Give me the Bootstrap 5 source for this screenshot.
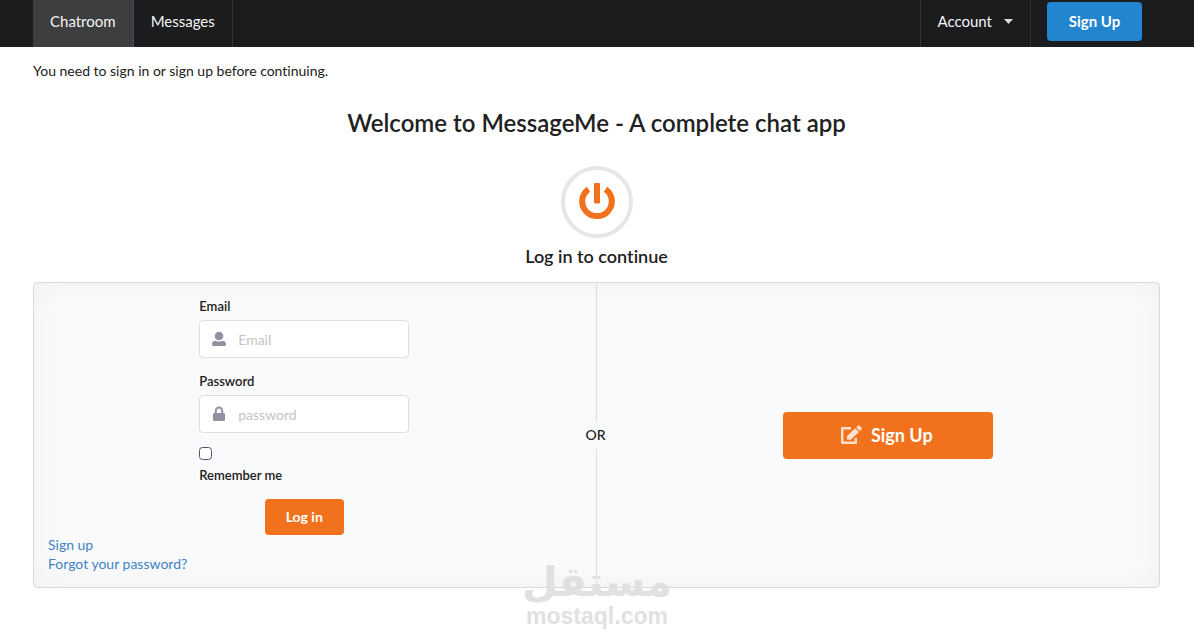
<!DOCTYPE html>
<html lang="en">
<head>
<meta charset="utf-8">
<meta name="viewport" content="width=device-width, initial-scale=1">
<title>MessageMe</title>
<link href="https://cdn.jsdelivr.net/npm/bootstrap@5.3.0/dist/css/bootstrap.min.css" rel="stylesheet">
<style>
  body { font-family: Lato, "Liberation Sans", sans-serif; font-size: 14px; line-height: 19px; color: #212121; background: #fff; font-variant-ligatures: none; }
  .page-pad { padding-left: 33px; padding-right: 34px; }
  .topbar { background: #1b1c1d; min-height: 47px; font-size: 15px; }
  .topbar .nav-link { color: #f4f4f4; padding: 0 17px 4px; height: 47px; display: flex; align-items: center; border-right: 1px dotted #48494a; }
  .topbar .nav-link.active { background: #3d3e3f; border-right-color: #5d4860; }
  .topbar .account-link { border-left: 1px dotted #48494a; padding-left: 16px; }
  .account-link::after { display: none; }
  .account-link svg { margin-left: 12px; }
  .btn { --bs-btn-border-width: 0; --bs-btn-border-radius: 4px; font-weight: 700; line-height: 18px; }
  .btn-signup { --bs-btn-color: #fff; --bs-btn-bg: #2185d0; --bs-btn-hover-color: #fff; --bs-btn-hover-bg: #1678c2; width: 95px; height: 39px; font-size: 15px; margin: 2px 18px 6px 16px; padding: 0 0 2px; }
  .btn-flame { --bs-btn-color: #fff; --bs-btn-bg: #f2711c; --bs-btn-hover-color: #fff; --bs-btn-hover-bg: #f26202; }
  .btn-login { font-size: 14px; height: 36px; padding: 0 21px; }
  .btn-join { font-size: 18px; width: 210px; height: 47px; padding: 0 5px 0 0; }
  h1, h2 { font-weight: 600; margin: 0; color: #212121; }
  .notice { padding-top: 14px; }
  h1 { font-size: 24px; line-height: 30px; margin-top: 28px; }
  h2 { font-size: 18px; line-height: 24px; }
  .power-ring { width: 72px; height: 72px; border: 4px solid #e6e6e6; border-radius: 50%; margin: 28px auto 6px; }
  .login-panel { background: #f9fafb; border: 1px solid #d8d9db; border-radius: 4px; box-shadow: inset 0 0 30px #f0f0f0; margin-top: 14px; }
  .login-side { padding: 14px 36px 14px 14px; }
  .join-side { padding: 14px 14px 14px 35px; }
  .login-fields { width: 210px; }
  .login-fields label { font-size: 13px; font-weight: 600; line-height: 18px; }
  .field-box { margin: 5px 0 14px; }
  .field-box .form-control { height: 38px; border: 1px solid #dededf; border-radius: 4px; font-size: 14px; padding: 0 14px 0 38px; }
  .form-control::placeholder { color: #c4c4c5; }
  .field-box svg { position: absolute; left: 12px; top: 11px; }
  .remember-box { width: 13px; height: 13px; margin: 0 0 6px; border: 1px solid #6b4a68; border-radius: 3px; float: none; }
  .login-action { margin-top: 15px; }
  .panel-link { color: #4183c4; text-decoration: none; }
  .split { width: 0; }
  .split i { border-left: 1px solid #dcddde; }
  .split span { line-height: 19px; padding: 3px 2px 5px 0; white-space: nowrap; font-weight: 500; }
  .stage { padding-bottom: 44px; }
  .brandmark { position: absolute; left: 0; right: 0; bottom: 2px; color: #dedede; opacity: .9; pointer-events: none; font-weight: 700; }
  .brandmark .brand-ar { font-family: "DejaVu Sans", sans-serif; font-size: 41px; line-height: 40px; }
  .brandmark .brand-en { font-family: "Liberation Sans", sans-serif; font-size: 23px; line-height: 28px; }
</style>
</head>
<body>
<nav class="topbar page-pad d-flex justify-content-between">
  <div class="d-flex">
    <a class="nav-link active" href="#">Chatroom</a>
    <a class="nav-link" href="#">Messages</a>
  </div>
  <div class="d-flex">
    <div class="dropdown">
      <a class="nav-link account-link dropdown-toggle" href="#" role="button" data-bs-toggle="dropdown" aria-expanded="false">Account
        <svg width="9" height="5" aria-hidden="true"><path d="M0 0h9L4.500 5z" fill="#dcdcdc"/></svg></a>
      <ul class="dropdown-menu"><li><a class="dropdown-item" href="#">Log in</a></li></ul>
    </div>
    <button class="btn btn-signup" type="button">Sign Up</button>
  </div>
</nav>

<main class="page-pad stage position-relative">
  <p class="mb-0 notice">You need to sign in or sign up before continuing.</p>
  <header class="text-center">
    <h1>Welcome to MessageMe - A complete chat app</h1>
    <div class="power-ring d-flex align-items-center justify-content-center">
      <svg width="36" height="38" viewBox="0 0 36 38" fill="none" stroke="#f2711c" aria-hidden="true">
        <path d="M9.500 6.200A14.800 14.800 0 1 0 26.500 6.200" stroke-width="6"/>
        <rect x="15" y="0" width="6" height="20.500" rx="1" fill="#f2711c" stroke="none"/>
      </svg>
    </div>
    <h2>Log in to continue</h2>
  </header>

  <section class="login-panel d-flex">
    <div class="login-side flex-fill w-50">
      <form>
        <div class="login-fields mx-auto">
          <label class="d-block" for="email">Email</label>
          <div class="field-box position-relative">
            <input class="form-control" id="email" type="email" placeholder="Email">
            <svg width="16" height="16" viewBox="0 0 16 16" fill="#9390a2" aria-hidden="true"><circle cx="8" cy="5" r="4.300"/><path d="M1 13.500Q1 10 4.500 9.700Q8 11.500 11.500 9.700Q15 10 15 13.500Q15 15 13.500 15h-11Q1 15 1 13.500z"/></svg>
          </div>
          <label class="d-block" for="password">Password</label>
          <div class="field-box position-relative">
            <input class="form-control" id="password" type="password" placeholder="password">
            <svg width="16" height="16" viewBox="0 0 16 16" fill="#9390a2" aria-hidden="true"><rect x="2" y="7" width="12" height="8" rx="1.300"/><path d="M4.800 8V4.800a3.200 3.200 0 0 1 6.400 0V8" fill="none" stroke="#9390a2" stroke-width="2"/></svg>
          </div>
          <input class="remember-box form-check-input d-block" id="remember" type="checkbox">
          <label class="d-block" for="remember">Remember me</label>
        </div>
        <div class="login-action d-flex justify-content-center"><button class="btn btn-flame btn-login" type="submit">Log in</button></div>
      </form>
      <a class="panel-link" href="#">Sign up</a><br>
      <a class="panel-link" href="#">Forgot your password?</a>
    </div>
    <div class="split d-flex flex-column align-items-center">
      <i class="flex-fill"></i><span>OR</span><i class="flex-fill"></i>
    </div>
    <div class="join-side flex-fill w-50 d-flex align-items-center justify-content-center">
      <button class="btn btn-flame btn-join d-flex align-items-center justify-content-center" type="button">
        <svg class="me-2" width="24" height="22" viewBox="0 0 24 22" fill="#fce0cb" aria-hidden="true"><path d="M12 4.200H3.200V18.800H16.800V14" fill="none" stroke="#fce0cb" stroke-width="2.400" stroke-linejoin="round"/><path d="M8 15.800V12L16.200 4.300l3.800 3.800-8.200 7.700z"/><path d="M17.200 3.400 19 1.600q.7-.6 1.400 0l2.300 2.300q.6.700 0 1.400L20.900 7.100z"/></svg>
        Sign Up</button>
    </div>
  </section>
  <div class="brandmark text-center">
    <div class="brand-ar" lang="ar" dir="rtl">مستقل</div>
    <div class="brand-en">mostaql.com</div>
  </div>
</main>
<script src="https://cdn.jsdelivr.net/npm/bootstrap@5.3.0/dist/js/bootstrap.bundle.min.js"></script>
</body>
</html>
